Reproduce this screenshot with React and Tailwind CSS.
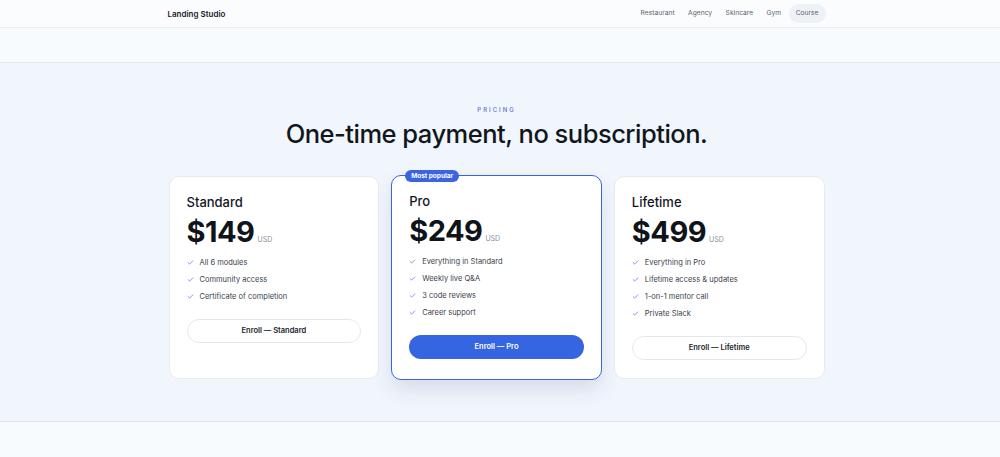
import React from "react";

const plans = [
  {
    name: "Standard",
    price: "$149",
    features: ["All 6 modules", "Community access", "Certificate of completion"],
    cta: "Enroll — Standard",
  },
  {
    name: "Pro",
    price: "$249",
    features: ["Everything in Standard", "Weekly live Q&A", "3 code reviews", "Career support"],
    cta: "Enroll — Pro",
    popular: true,
  },
  {
    name: "Lifetime",
    price: "$499",
    features: ["Everything in Pro", "Lifetime access & updates", "1-on-1 mentor call", "Private Slack"],
    cta: "Enroll — Lifetime",
  },
];

function Check() {
  return (
    <svg width="7" height="7" viewBox="0 0 24 24" fill="none" stroke="#5b6fd6" strokeWidth="2.5" strokeLinecap="round" strokeLinejoin="round">
      <path d="M4 12.5l5 5L20 6.5" />
    </svg>
  );
}

function Card({ plan }) {
  const pop = plan.popular;
  return (
    <div
      className={
        "relative flex flex-col rounded-[10px] bg-white px-[17px] pt-[17px] " +
        (pop
          ? "border-[1.5px] border-[#3b65e0] pb-[18px] shadow-[0_10px_20px_rgba(30,50,100,0.12)] -mt-px -mb-px"
          : "border border-[#e6ebf2] pb-[18px]")
      }
    >
      {pop && (
        <div className="absolute left-[13px] top-[-6px] rounded-full bg-[#3b65e0] px-[6px] h-[12px] flex items-center text-[6.5px] font-bold text-white leading-none">
          Most popular
        </div>
      )}
      <div className="text-[13px] font-medium text-[#14171f] leading-none mt-[2px]">{plan.name}</div>
      <div className="mt-[8px] flex items-baseline gap-[3px]">
        <span className="text-[29px] font-bold tracking-[-0.5px] text-[#0f131a] leading-none">{plan.price}</span>
        <span className="text-[7px] text-[#8a919c]">USD</span>
      </div>
      <ul className="mt-[12px] flex flex-col gap-[8px]">
        {plan.features.map((f) => (
          <li key={f} className="flex items-center gap-[6px] text-[7.5px] leading-[9px] text-[#3b414b]">
            <Check />
            <span>{f}</span>
          </li>
        ))}
      </ul>
      <button
        className={
          "mt-[18px] h-[24px] w-full rounded-full text-[7.5px] font-semibold " +
          (pop ? "bg-[#3565e1] text-white" : "border border-[#e3e8ef] bg-white text-[#20242c]")
        }
      >
        {plan.cta}
      </button>
    </div>
  );
}

export default function App() {
  return (
    <div className="min-h-[457px] bg-[#f8fbfe]" style={{ fontFamily: "Inter, 'Noto Sans', sans-serif" }}>
      <header className="h-[28px] border-b border-[#e8edf3] bg-[#fbfcfe] pr-[7px]">
        <div className="mx-auto flex h-full w-[658px] items-center justify-between">
          <div className="text-[8px] font-semibold text-[#1c2028]">Landing Studio</div>
          <nav className="flex items-center gap-[1.5px] text-[6.7px] text-[#5c636e]">
            <span className="px-[6px] py-[4px]">Restaurant</span>
            <span className="px-[6px] py-[4px]">Agency</span>
            <span className="px-[6px] py-[4px]">Skincare</span>
            <span className="px-[6px] py-[4px]">Gym</span>
            <span className="rounded-full bg-[#eef2f7] px-[7px] py-[4px]">Course</span>
          </nav>
        </div>
      </header>
      <div className="h-[35px] border-b border-[#e3e9f1] bg-[#f8fbfe]" />
      <section className="border-b border-[#dfe5ee] bg-[#f1f6fd] pt-[42px] pb-[42px] pr-[7px]">
        <div className="text-center text-[6px] font-medium tracking-[2px] text-[#5b6fd6]">PRICING</div>
        <h1 className="mt-[5px] text-center text-[25.5px] font-medium tracking-[-0.5px] text-[#12161d] leading-[30px]">
          One-time payment, no subscription.
        </h1>
        <div className="mx-auto mt-[27px] grid w-[656px] grid-cols-3 gap-[12px]">
          {plans.map((p) => (
            <Card key={p.name} plan={p} />
          ))}
        </div>
      </section>
    </div>
  );
}
